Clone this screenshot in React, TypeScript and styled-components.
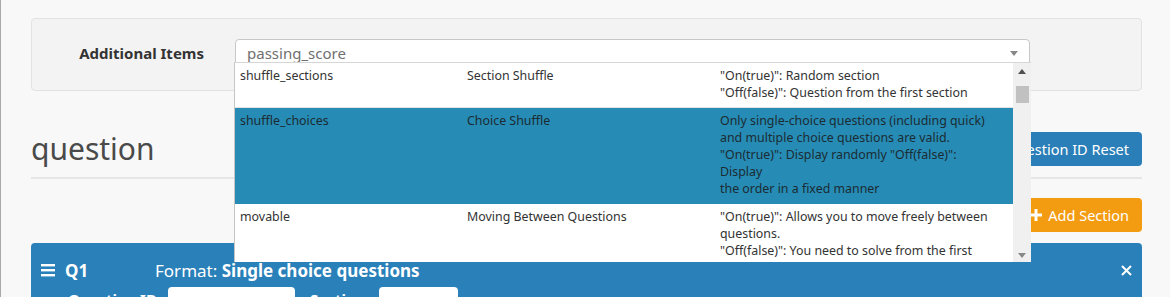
import styled, { createGlobalStyle } from "styled-components";

const GlobalStyle = createGlobalStyle`
    html, body {
        margin: 0;
        padding: 0;
        background: #f8f8f8;
        overflow: hidden;
    }
    body {
        font-family: "Noto Sans", "Open Sans", sans-serif;
        color: #333;
    }
`;

const Page = styled.div`
    height: 297px;
    border-left: 1px solid #a9a9a9;
    padding: 18px 28px 0 30px;
    box-sizing: border-box;
    overflow: hidden;
`;

const FilterPanel = styled.div`
    display: flex;
    align-items: flex-start;
    background: #f3f3f3;
    border: 1px solid #e2e2e2;
    border-radius: 4px;
    padding: 20px 0 23px;
`;

const FilterLabel = styled.label`
    width: 172px;
    padding-right: 17px;
    text-align: right;
    font-size: 15px;
    font-weight: 700;
    line-height: 28px;
    color: #333;
`;

const SelectWrap = styled.div`
    position: relative;
    margin-left: 14px;
    width: 795px;
`;

const SelectBox = styled.div`
    height: 28px;
    box-sizing: border-box;
    border: 1px solid #c8c8c8;
    border-radius: 4px;
    background: #fff;
    display: flex;
    align-items: center;
    justify-content: space-between;
    padding: 0 11px 0 11px;
    font-size: 15px;
    color: #707070;
`;

const Caret = styled.span<{ $up?: boolean }>`
    width: 0;
    height: 0;
    border-left: 4px solid transparent;
    border-right: 4px solid transparent;
    ${(p) => (p.$up ? "border-bottom: 5px solid #505050;" : "border-top: 5px solid #888;")}
`;

const Dropdown = styled.div`
    position: absolute;
    top: 23px;
    left: -1px;
    width: 797px;
    height: 200px;
    box-sizing: border-box;
    background: #fff;
    border-left: 1px solid #c6c6c6;
    border-top: 1px solid #d6d6d6;
    display: flex;
    z-index: 10;
    overflow: hidden;
`;

const List = styled.div`
    flex: 1;
    overflow: hidden;
`;

const Row = styled.div<{ $active?: boolean }>`
    display: grid;
    grid-template-columns: 227px 253px 1fr;
    padding: 4px 0 6px 5px;
    font-size: 12.4px;
    line-height: 17px;
    color: ${(p) => (p.$active ? "#1c2b33" : "#333")};
    background: ${(p) => (p.$active ? "#268cb5" : "#fff")};
    border-bottom: 1px solid ${(p) => (p.$active ? "#268cb5" : "#e2e2e2")};
`;

const Line = styled.div`
    white-space: nowrap;
`;

const Scrollbar = styled.div`
    width: 18px;
    background: #f0f0f0;
    display: flex;
    flex-direction: column;
    align-items: center;
    padding: 6px 0 4px;
    box-sizing: border-box;
`;

const Thumb = styled.div`
    width: 13px;
    height: 17px;
    background: #c1c1c1;
    margin-top: 12px;
    flex: none;
`;

const Spacer = styled.div`
    flex: 1;
`;

const HeaderRow = styled.div`
    display: flex;
    align-items: center;
    justify-content: space-between;
    height: 57px;
    margin-top: 29px;
    border-bottom: 2px solid #e6e6e6;
`;

const Title = styled.h1`
    margin: 0;
    font-size: 30px;
    font-weight: 400;
    color: #4a4a4a;
`;

const Button = styled.button<{ $tone: "blue" | "orange" }>`
    height: 34px;
    border: none;
    border-radius: 4px;
    padding: 0 13px;
    font-family: inherit;
    font-size: 14.5px;
    color: #fff;
    display: flex;
    align-items: center;
    gap: 6px;
    background: ${(p) => (p.$tone === "blue" ? "#2b7fb8" : "#f39c12")};
`;

const ActionRow = styled.div`
    display: flex;
    justify-content: flex-end;
    margin-top: 19px;
`;

const QuestionPanel = styled.div`
    margin-top: 11px;
    background: #2a80b9;
    border-radius: 4px 4px 0 0;
    padding: 16px 10px 0 10px;
    color: #fff;
`;

const QuestionHead = styled.div`
    display: flex;
    align-items: center;
    height: 22px;
    font-size: 17px;
`;

const QNumber = styled.span`
    font-weight: 700;
    width: 90px;
    margin-left: 10px;
`;

const Format = styled.span`
    flex: 1;
    b {
        font-weight: 700;
    }
`;

const FieldRow = styled.div`
    display: flex;
    align-items: flex-start;
    margin-top: 6px;
    font-size: 15px;
    font-weight: 700;
`;

const FieldLabel = styled.span<{ $w: number; $pad: number }>`
    width: ${(p) => p.$w}px;
    padding-left: ${(p) => p.$pad}px;
    box-sizing: border-box;
    padding-top: 2px;
    line-height: 20px;
    white-space: nowrap;
`;

const Input = styled.div<{ $w: number }>`
    width: ${(p) => p.$w}px;
    height: 30px;
    background: #fff;
    border-radius: 4px;
`;

const rows = [
    {
        key: "shuffle_sections",
        name: "Section Shuffle",
        desc: ['"On(true)": Random section', '"Off(false)": Question from the first section'],
    },
    {
        key: "shuffle_choices",
        name: "Choice Shuffle",
        active: true,
        desc: [
            "Only single-choice questions (including quick)",
            "and multiple choice questions are valid.",
            '"On(true)": Display randomly "Off(false)":',
            "Display",
            "the order in a fixed manner",
        ],
    },
    {
        key: "movable",
        name: "Moving Between Questions",
        desc: [
            '"On(true)": Allows you to move freely between',
            "questions.",
            '"Off(false)": You need to solve from the first',
            "question in order",
        ],
    },
];

function Bars() {
    return (
        <svg width="14" height="14" viewBox="0 0 14 14">
            <rect x="0" y="1" width="14" height="2.4" fill="#fff" />
            <rect x="0" y="6" width="14" height="2.4" fill="#fff" />
            <rect x="0" y="11" width="14" height="2.4" fill="#fff" />
        </svg>
    );
}

function Close() {
    return (
        <svg width="11" height="11" viewBox="0 0 11 11">
            <path d="M1 1L10 10M10 1L1 10" stroke="#fff" strokeWidth="2" />
        </svg>
    );
}

function Plus() {
    return (
        <svg width="12" height="12" viewBox="0 0 12 12">
            <path d="M6 0V12M0 6H12" stroke="#fff" strokeWidth="3" />
        </svg>
    );
}

export default function App() {
    return (
        <>
            <GlobalStyle />
            <Page>
                <FilterPanel>
                    <FilterLabel>Additional Items</FilterLabel>
                    <SelectWrap>
                        <SelectBox>
                            <span>passing_score</span>
                            <Caret />
                        </SelectBox>
                        <Dropdown>
                            <List>
                                {rows.map((r) => (
                                    <Row key={r.key} $active={r.active}>
                                        <div>{r.key}</div>
                                        <div>{r.name}</div>
                                        <div>
                                            {r.desc.map((d, i) => (
                                                <Line key={i}>{d}</Line>
                                            ))}
                                        </div>
                                    </Row>
                                ))}
                            </List>
                            <Scrollbar>
                                <Caret $up />
                                <Thumb />
                                <Spacer />
                                <Caret />
                            </Scrollbar>
                        </Dropdown>
                    </SelectWrap>
                </FilterPanel>

                <HeaderRow>
                    <Title>question</Title>
                    <Button $tone="blue">Question ID Reset</Button>
                </HeaderRow>

                <ActionRow>
                    <Button $tone="orange">
                        <Plus />
                        Add Section
                    </Button>
                </ActionRow>

                <QuestionPanel>
                    <QuestionHead>
                        <Bars />
                        <QNumber>Q1</QNumber>
                        <Format>
                            Format: <b>Single choice questions</b>
                        </Format>
                        <Close />
                    </QuestionHead>
                    <FieldRow>
                        <FieldLabel $w={127} $pad={27}>Question ID</FieldLabel>
                        <Input $w={127} />
                        <FieldLabel $w={84} $pad={15}>Section</FieldLabel>
                        <Input $w={79} />
                    </FieldRow>
                </QuestionPanel>
            </Page>
        </>
    );
}
